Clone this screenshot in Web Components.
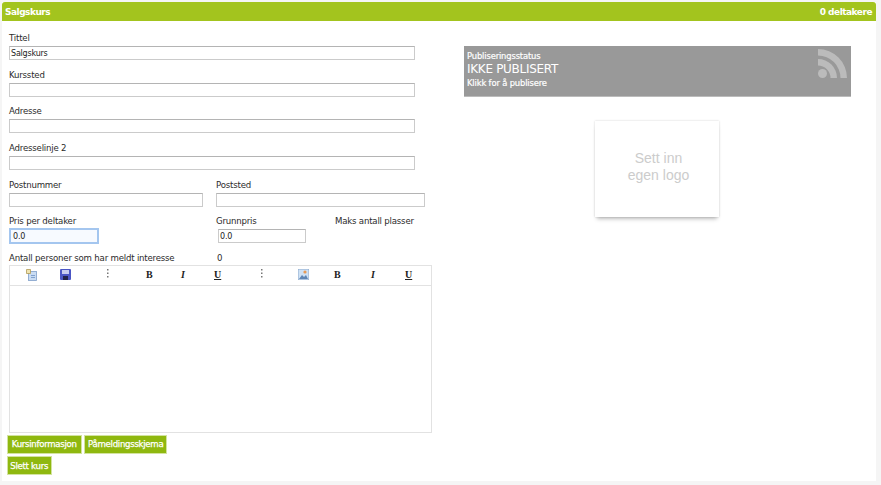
<!DOCTYPE html>
<html lang="no">
<head>
<meta charset="utf-8">
<title>Salgskurs</title>
<style>
    html, body { margin: 0; height: 100%; }
    body { background: #f5f5f5; font-family: "DejaVu Sans", Verdana, sans-serif; font-size: 9px; color: #2b2b2b; }
</style>
</head>
<body>
<course-page>
    <span slot="title">Salgskurs</span>
    <span slot="count">0 deltakere</span>
    <course-form slot="left"></course-form>
    <status-card slot="right"></status-card>
    <logo-box slot="right"></logo-box>
</course-page>

<script>
class CoursePage extends HTMLElement {
    template = `
    <style>
        :host{ display: block; width: 874px; height: 479px; margin: 2px 0 0 2px; background: #fff; }
        .head{
            height: 19px;
            display: flex;
            justify-content: space-between;
            align-items: center;
            padding: 0 4px 0 3px;
            background: #a3c41e;
            border-radius: 3px 3px 0 0;
            color: #fff;
            font-weight: bold;
            font-size: 9px;
            letter-spacing: -.5px;
        }
        .body{ display: flex; }
        .left{ width: 462px; flex: none; }
        .right{ flex: 1; padding-top: 25px; }
    </style>
    <div class="head"><slot name="title"></slot><slot name="count"></slot></div>
    <div class="body">
        <div class="left"><slot name="left"></slot></div>
        <div class="right"><slot name="right"></slot></div>
    </div>
    `;
    constructor() {
        super();
        this.attachShadow({ mode: 'open' });
        this.shadowRoot.innerHTML = this.template;
    }
}

class FormField extends HTMLElement {
    template = `
    <style>
        :host{ display: block; height: 36.7px; }
        label{ display: block; height: 15px; line-height: 14px; }
        .wrap{ margin-left: var(--inset, 0); width: var(--w, 406px); height: 14px; box-sizing: border-box;
            border: 1px solid #cbcbcb; border-top-color: #b4b4b4; background: #fff;
            font-size: 8px; line-height: 12px; padding: 1px 0 0 1px; color: #222; letter-spacing: -.2px; }
        :host([focused]) .wrap{ outline: 2px solid #a4c6ef; outline-offset: -1px; border-color: #7fa6d6; background: #f7faff; padding-left: 2px; }
    </style>
    <label></label>
    <div class="wrap"></div>
    `;
    constructor() {
        super();
        this.attachShadow({ mode: 'open' });
        this.shadowRoot.innerHTML = this.template;
        this.shadowRoot.querySelector('label').textContent = this.getAttribute('label') || '';
        this.shadowRoot.querySelector('.wrap').textContent = this.getAttribute('value') || '';
    }
}

class RichEditor extends HTMLElement {
    template = `
    <style>
        :host{ display: block; width: 423px; height: 168px; box-sizing: border-box; border: 1px solid #e2e2e2; background: #fff; letter-spacing: 0; }
        .bar{ position: relative; height: 19px; border-bottom: 1px solid #e2e2e2; }
        .bar > *{ position: absolute; top: 3px; }
        b,i,u{ font-family: "Liberation Serif", serif; font-size: 10px; font-weight: bold; color: #222; top: 3px; line-height: 12px; }
        i{ font-style: italic; }
        svg{ display: block; }
    </style>
    <div class="bar">
        <svg style="left:16px" width="11" height="12" viewBox="0 0 11 12">
            <rect x="2.5" y="2.5" width="8" height="9" fill="#c9dcf3" stroke="#7f9fc9" stroke-width=".8"/>
            <path d="M.5.5h4v4h-4z" fill="#efe3b0" stroke="#b09a55" stroke-width=".8"/>
            <path d="M5 6.5h4M5 8.5h4" stroke="#6e93c4" stroke-width=".8"/>
        </svg>
        <svg style="left:50px" width="11" height="12" viewBox="0 0 11 12">
            <rect width="11" height="11" y="0" fill="#4a55c4" rx="1"/>
            <rect x="2" y="1" width="7" height="4" fill="#c7ccf0"/>
            <rect x="3" y="7" width="5" height="4" fill="#20224a"/>
        </svg>
        <svg style="left:97px;top:3px" width="2" height="9" viewBox="0 0 2 9">
            <path d="M0 0h1.5v1.5H0zM0 3.5h1.5V5H0zM0 7h1.5v1.5H0z" fill="#777"/>
        </svg>
        <b style="left:136px">B</b>
        <i style="left:171px">I</i>
        <u style="left:204px">U</u>
        <svg style="left:251px;top:3px" width="2" height="9" viewBox="0 0 2 9">
            <path d="M0 0h1.5v1.5H0zM0 3.5h1.5V5H0zM0 7h1.5v1.5H0z" fill="#777"/>
        </svg>
        <svg style="left:288px" width="11" height="11" viewBox="0 0 11 11">
            <rect width="11" height="11" fill="#cfe2f5" stroke="#7f9fc4" stroke-width=".8"/>
            <path d="M1 10l3-4 2 2 2-2 2 4z" fill="#5f86b5"/>
            <circle cx="7" cy="3" r="1.6" fill="#e89a55"/>
        </svg>
        <b style="left:324px">B</b>
        <i style="left:361px">I</i>
        <u style="left:395px">U</u>
    </div>
    `;
    constructor() {
        super();
        this.attachShadow({ mode: 'open' });
        this.shadowRoot.innerHTML = this.template;
    }
}

class ActionButton extends HTMLElement {
    template = `
    <style>
        :host{ display: inline-flex; align-items: center; justify-content: center; box-sizing: border-box; height: 19px;
            width: var(--w); background: #8fb80f; color: #fff; font-size: 8.6px; letter-spacing: -.3px;
            -webkit-text-stroke: .25px #fff; border: 1px solid #d3e3a0; white-space: nowrap; }
    </style>
    <slot></slot>
    `;
    constructor() {
        super();
        this.attachShadow({ mode: 'open' });
        this.shadowRoot.innerHTML = this.template;
    }
}

class CourseForm extends HTMLElement {
    template = `
    <style>
        :host{ display: block; padding: 10px 0 0 7px; font-size: 8.6px; letter-spacing: -.2px; }
        .two{ display: grid; grid-template-columns: 207px 1fr; }
        .three{ display: grid; grid-template-columns: 207px 119px 1fr; height: 36.7px; }
        .plain{ height: 14px; line-height: 14px; white-space: nowrap; }
        .count{ display: grid; grid-template-columns: 208px 1fr; height: 14px; line-height: 14px; }
        .actions{ margin: 1.5px 0 0 -2.3px; display: flex; flex-wrap: wrap; gap: 2.5px; width: 200px; }
    </style>
    <form-field label="Tittel" value="Salgskurs"></form-field>
    <form-field label="Kurssted"></form-field>
    <form-field label="Adresse"></form-field>
    <form-field label="Adresselinje 2"></form-field>
    <div class="two">
        <form-field label="Postnummer" style="--w:194px"></form-field>
        <form-field label="Poststed" style="--w:209px"></form-field>
    </div>
    <div class="three">
        <form-field label="Pris per deltaker" value="0.0" focused style="--w:88px;--inset:1px"></form-field>
        <form-field label="Grunnpris" value="0.0" style="--w:88px;--inset:2px"></form-field>
        <div class="plain">Maks antall plasser</div>
    </div>
    <div class="count"><span>Antall personer som har meldt interesse</span><span>0</span></div>
    <rich-editor></rich-editor>
    <div class="actions">
        <action-button style="--w:75px">Kursinformasjon</action-button>
        <action-button style="--w:83px">Påmeldingsskjema</action-button>
        <action-button style="--w:45px">Slett kurs</action-button>
    </div>
    `;
    constructor() {
        super();
        this.attachShadow({ mode: 'open' });
        this.shadowRoot.innerHTML = this.template;
    }
}

class StatusCard extends HTMLElement {
    template = `
    <style>
        :host{ display: block; width: 387px; height: 51px; box-sizing: border-box; background: #999;
            color: #fff; padding: 4px 3px; position: relative; border-bottom: 1px solid #bbb; font-size: 8.4px; line-height: 12px; }
        .sub{ -webkit-text-stroke: .2px #fff; letter-spacing: -.15px; }
        .big{ font-size: 12px; line-height: 15px; letter-spacing: -.3px; }
        svg{ position: absolute; right: 4px; top: 3px; }
    </style>
    <div class="sub">Publiseringsstatus</div>
    <div class="big">IKKE PUBLISERT</div>
    <div class="sub">Klikk for å publisere</div>
    <svg width="29" height="29" viewBox="0 0 29 29" fill="#bbb">
        <circle cx="4.5" cy="24.5" r="4.5"/>
        <path d="M0 10v6.5A12.5 12.5 0 0 1 12.5 29H19A19 19 0 0 0 0 10z"/>
        <path d="M0 0v6.5A22.5 22.5 0 0 1 22.5 29H29A29 29 0 0 0 0 0z"/>
    </svg>
    `;
    constructor() {
        super();
        this.attachShadow({ mode: 'open' });
        this.shadowRoot.innerHTML = this.template;
    }
}

class LogoBox extends HTMLElement {
    template = `
    <style>
        :host{ display: flex; align-items: center; justify-content: center; text-align: center;
            width: 124px; height: 96px; margin: 24px 0 0 131px; box-sizing: border-box; padding: 0 0 4px 3px;
            background: #fff; color: #ccc; font-family: "Liberation Sans", Arial, sans-serif; font-size: 14px; line-height: 17px;
            box-shadow: 0 0 2px rgba(0,0,0,.18), 0 4px 4px -2px rgba(0,0,0,.25); }
    </style>
    <div>Sett inn<br>egen logo</div>
    `;
    constructor() {
        super();
        this.attachShadow({ mode: 'open' });
        this.shadowRoot.innerHTML = this.template;
    }
}

customElements.define('form-field', FormField);
customElements.define('rich-editor', RichEditor);
customElements.define('action-button', ActionButton);
customElements.define('course-form', CourseForm);
customElements.define('status-card', StatusCard);
customElements.define('logo-box', LogoBox);
customElements.define('course-page', CoursePage);
</script>
</body>
</html>
